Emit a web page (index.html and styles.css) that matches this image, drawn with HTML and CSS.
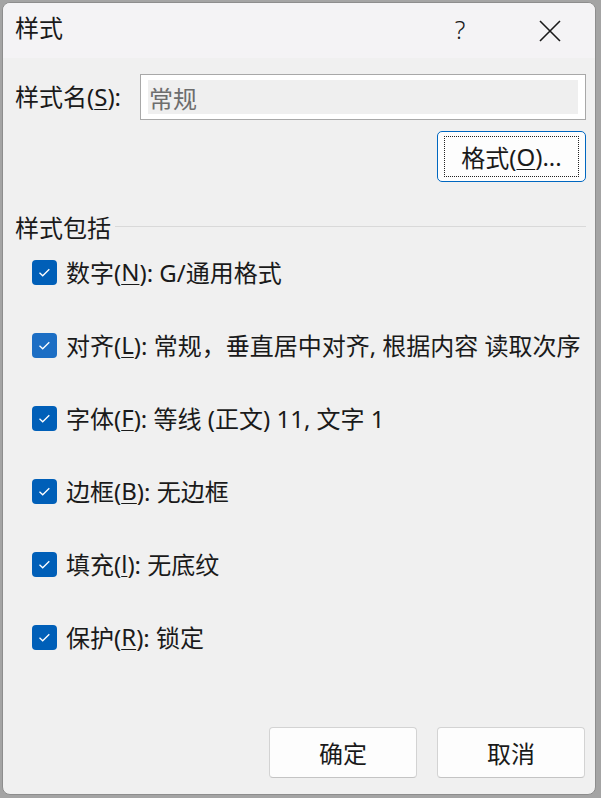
FILE: index.html
```html
<!DOCTYPE html>
<html lang="zh-CN">
<head>
  <meta charset="UTF-8">
  <meta name="viewport" content="width=device-width, initial-scale=1.0">
  <title>样式</title>
  <link rel="stylesheet" href="styles.css">
</head>
<body>
  <div class="dialog">
    <div class="titlebar">
      <span class="title">样式</span>
      <span class="help">?</span>
      <span class="close">
        <svg width="22" height="22" viewBox="0 0 22 22"><path d="M1 1L21 21M21 1L1 21" stroke="#1a1a1a" stroke-width="1.6" fill="none"/></svg>
      </span>
    </div>

    <div class="content">
      <div class="name-row">
        <label class="name-label">样式名(<u>S</u>):</label>
        <div class="name-input"><span class="name-value">常规</span></div>
      </div>

      <div class="format-row">
        <button class="format-btn"><span class="focus">格式(<u>O</u>)...</span></button>
      </div>

      <div class="group-head">
        <span>样式包括</span>
        <span class="group-line"></span>
      </div>

      <div class="options">
        <div class="option"><span class="check"><svg width="25" height="25" viewBox="0 0 25 25"><path d="M7.5 12.8L10.7 15.8L17.3 9.2" stroke="#fff" stroke-width="1.3" fill="none"/></svg></span>数字(<u>N</u>): G/通用格式</div>
        <div class="option"><span class="check hover"><svg width="25" height="25" viewBox="0 0 25 25"><path d="M7.5 12.8L10.7 15.8L17.3 9.2" stroke="#fff" stroke-width="1.3" fill="none"/></svg></span>对齐(<u>L</u>): 常规，垂直居中对齐, 根据内容 读取次序</div>
        <div class="option"><span class="check"><svg width="25" height="25" viewBox="0 0 25 25"><path d="M7.5 12.8L10.7 15.8L17.3 9.2" stroke="#fff" stroke-width="1.3" fill="none"/></svg></span>字体(<u>F</u>): 等线 (正文) 11, 文字 1</div>
        <div class="option"><span class="check"><svg width="25" height="25" viewBox="0 0 25 25"><path d="M7.5 12.8L10.7 15.8L17.3 9.2" stroke="#fff" stroke-width="1.3" fill="none"/></svg></span>边框(<u>B</u>): 无边框</div>
        <div class="option"><span class="check"><svg width="25" height="25" viewBox="0 0 25 25"><path d="M7.5 12.8L10.7 15.8L17.3 9.2" stroke="#fff" stroke-width="1.3" fill="none"/></svg></span>填充(<u>l</u>): 无底纹</div>
        <div class="option"><span class="check"><svg width="25" height="25" viewBox="0 0 25 25"><path d="M7.5 12.8L10.7 15.8L17.3 9.2" stroke="#fff" stroke-width="1.3" fill="none"/></svg></span>保护(<u>R</u>): 锁定</div>
      </div>

      <div class="footer">
        <button class="btn">确定</button>
        <button class="btn">取消</button>
      </div>
    </div>
  </div>
</body>
</html>
```

FILE: styles.css
```css
body {
  margin: 0;
  background: #a4a4a4;
  font-family: "Noto Sans", "Noto Sans CJK SC", sans-serif;
  font-size: 24px;
  color: #1a1a1a;
}
u {
  text-decoration-thickness: 1px;
  text-underline-offset: 3px;
}
.dialog {
  margin: 2px 0 0 2px;
  width: 594px;
  height: 793px;
  box-sizing: border-box;
  border: 1px solid #8d8d8d;
  border-radius: 8px;
  background: #f0f0f0;
  overflow: hidden;
  display: flex;
  flex-direction: column;
}
.titlebar {
  height: 55px;
  display: flex;
  align-items: center;
  background: #f4f3f5;
  flex-shrink: 0;
}
.title {
  flex: 1;
  padding: 0 0 5px 12px;
  line-height: 1;
}
.help,
.close {
  width: 90px;
  height: 55px;
  display: flex;
  align-items: center;
  justify-content: center;
}
.help {
  font-size: 25px;
  font-weight: 300;
  padding-bottom: 3px;
  box-sizing: border-box;
}
.close svg {
  display: block;
}
.content {
  flex: 1;
  display: flex;
  flex-direction: column;
  padding: 16px 9px 16px 12px;
}
.name-row {
  display: flex;
  align-items: center;
}
.name-label {
  width: 125px;
  flex-shrink: 0;
  padding-bottom: 3px;
}
.name-input {
  flex: 1;
  height: 46px;
  box-sizing: border-box;
  border: 1px solid #a8a8a8;
  background: #fff;
  padding: 5px 7px;
  display: flex;
}
.name-value {
  flex: 1;
  background: #efefef;
  color: #6d6d6d;
  display: flex;
  align-items: center;
  padding-left: 1px;
}
.format-row {
  display: flex;
  justify-content: flex-end;
  margin-top: 11px;
}
.format-btn {
  width: 149px;
  height: 51px;
  border: 1.5px solid #0067c0;
  border-radius: 5px;
  background: #fdfdfd;
  font: inherit;
  color: inherit;
  padding: 4px 6px;
  display: flex;
}
.focus {
  flex: 1;
  border: 1px dotted #222;
  display: flex;
  align-items: center;
  justify-content: center;
}
.group-head {
  display: flex;
  align-items: center;
  height: 30px;
  margin-top: 29px;
}
.group-line {
  flex: 1;
  height: 1px;
  background: #d9d9d9;
  margin: 0 0 0 4px;
}
.options {
  display: flex;
  flex-direction: column;
  gap: 25px;
  margin-top: 6px;
}
.option {
  height: 48px;
  display: flex;
  align-items: center;
  padding-left: 17px;
  white-space: nowrap;
}
.check {
  width: 25px;
  height: 25px;
  border-radius: 4px;
  background: #005fb8;
  margin: 2px 9px 0 0;
  flex-shrink: 0;
}
.check.hover {
  background: #1c6ec4;
}
.check svg {
  display: block;
}
.footer {
  margin-top: auto;
  display: flex;
  justify-content: flex-end;
  gap: 20px;
  padding-right: 1px;
}
.btn {
  width: 148px;
  height: 51px;
  background: #fdfdfd;
  border: 1px solid #d3d3d3;
  border-bottom-color: #c4c4c4;
  border-radius: 4px;
  font: inherit;
  color: inherit;
}
```
